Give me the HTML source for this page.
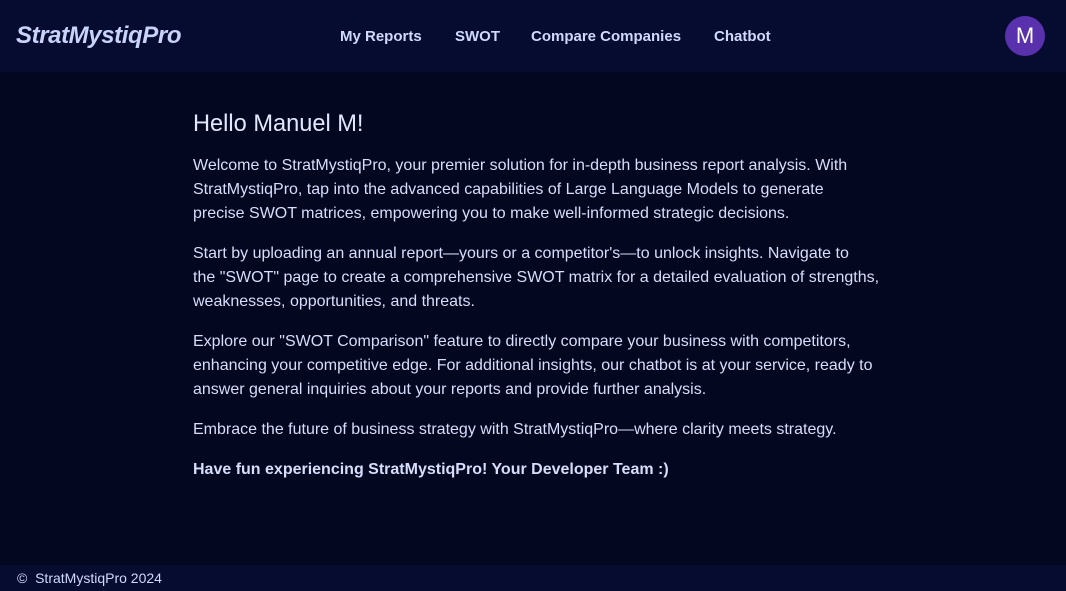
<!DOCTYPE html>
<html><head><meta charset="utf-8"><style>
*{margin:0;padding:0;box-sizing:border-box}
body{width:1066px;height:591px;background:#03071f;font-family:"Liberation Sans",sans-serif;color:#d8ddfb;overflow:hidden;position:relative}
.hdr{position:absolute;left:0;top:0;width:1066px;height:72px;background:#060c2f}
.logo{position:absolute;left:16px;top:22px;font-size:24px;font-weight:bold;font-style:italic;color:#c8d2fb;letter-spacing:-0.4px}
.nav{position:absolute;top:28px;font-size:15px;font-weight:bold;color:#d0d8fb}
.av{position:absolute;left:1005px;top:16px;width:40px;height:40px;border-radius:50%;background:#5a31ac;color:#fff;font-size:22px;text-align:center;line-height:40px}
.main{position:absolute;left:193px;top:109px;width:760px;white-space:nowrap}
h1{font-size:23.6px;font-weight:normal;color:#e4e8ff;margin-bottom:15px;line-height:30px}
p{font-size:16px;line-height:24px;margin-bottom:16px}
.ftr{position:absolute;left:0;top:565px;width:1066px;height:26px;background:#060c2f;font-size:14px;color:#d0d8fb;padding:5px 0 0 17px}
</style></head><body>
<div class="hdr">
<div class="logo">StratMystiqPro</div>
<div class="nav" style="left:340px">My Reports</div>
<div class="nav" style="left:455px">SWOT</div>
<div class="nav" style="left:531px">Compare Companies</div>
<div class="nav" style="left:714px">Chatbot</div>
<div class="av">M</div>
</div>
<div class="main">
<h1>Hello Manuel M!</h1>
<p>Welcome to StratMystiqPro, your premier solution for in-depth business report analysis. With<br>StratMystiqPro, tap into the advanced capabilities of Large Language Models to generate<br>precise SWOT matrices, empowering you to make well-informed strategic decisions.</p>
<p>Start by uploading an annual report—yours or a competitor's—to unlock insights. Navigate to<br>the "SWOT" page to create a comprehensive SWOT matrix for a detailed evaluation of strengths,<br>weaknesses, opportunities, and threats.</p>
<p>Explore our "SWOT Comparison" feature to directly compare your business with competitors,<br>enhancing your competitive edge. For additional insights, our chatbot is at your service, ready to<br>answer general inquiries about your reports and provide further analysis.</p>
<p>Embrace the future of business strategy with StratMystiqPro—where clarity meets strategy.</p>
<p><b>Have fun experiencing StratMystiqPro! Your Developer Team :)</b></p>
</div>
<div class="ftr">©&nbsp;&nbsp;StratMystiqPro 2024</div>
</body></html>
